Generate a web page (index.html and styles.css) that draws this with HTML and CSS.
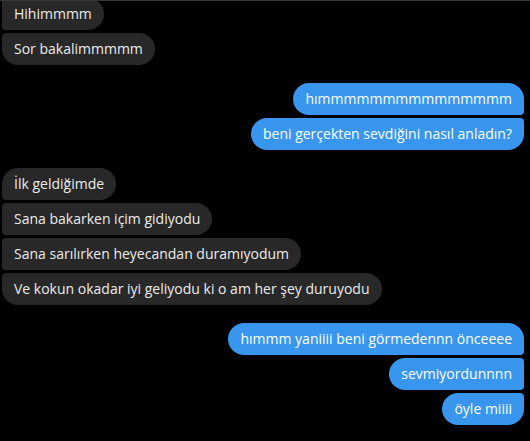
FILE: index.html
```html
<!DOCTYPE html>
<html lang="tr">
<head>
<meta charset="utf-8">
<link rel="stylesheet" href="styles.css">
</head>
<body>
<div class="chat">
  <div class="group in first-group">
    <div class="msg cut">Hihimmmm</div>
    <div class="msg">Sor bakalimmmmm</div>
  </div>
  <div class="group out">
    <div class="msg">hımmmmmmmmmmmmmmm</div>
    <div class="msg">beni gerçekten sevdiğini nasıl anladın?</div>
  </div>
  <div class="group in">
    <div class="msg">İlk geldiğimde</div>
    <div class="msg">Sana bakarken içim gidiyodu</div>
    <div class="msg">Sana sarılırken heyecandan duramıyodum</div>
    <div class="msg">Ve kokun okadar iyi geliyodu ki o am her şey duruyodu</div>
  </div>
  <div class="group out">
    <div class="msg">hımmm yaniiii beni görmedennn önceeee</div>
    <div class="msg">sevmiyordunnnn</div>
    <div class="msg">öyle miiii</div>
  </div>
</div>
</body>
</html>
```

FILE: styles.css
```css
html, body {
  margin: 0;
  padding: 0;
  background: #000;
}
body {
  border-top: 1px solid #353535;
  width: 530px;
  height: 440px;
  overflow: hidden;
  font-family: "Open Sans", "Noto Sans", sans-serif;
  font-size: 14px;
}
.chat {
  display: flex;
  flex-direction: column;
  gap: 18px;
  padding: 0 6px 0 2px;
}
.group {
  display: flex;
  flex-direction: column;
  gap: 3px;
}
.first-group {
  margin-top: -3px;
}
.group.in { align-items: flex-start; }
.group.out { align-items: flex-end; }
.msg {
  height: 32px;
  line-height: 32px;
  padding: 0 12px;
  white-space: nowrap;
  border-radius: 16px;
}
.in .msg {
  background: #282828;
  color: #ececec;
  border-top-left-radius: 4px;
  border-bottom-left-radius: 4px;
}
.in .msg:first-child { border-top-left-radius: 16px; }
.in .msg:last-child { border-bottom-left-radius: 16px; }
.out .msg {
  background: #3896ee;
  color: #fff;
  border-top-right-radius: 4px;
  border-bottom-right-radius: 4px;
}
.out .msg:first-child { border-top-right-radius: 16px; }
.out .msg:last-child { border-bottom-right-radius: 16px; }
.in .msg.cut { border-top-left-radius: 4px; }
```
